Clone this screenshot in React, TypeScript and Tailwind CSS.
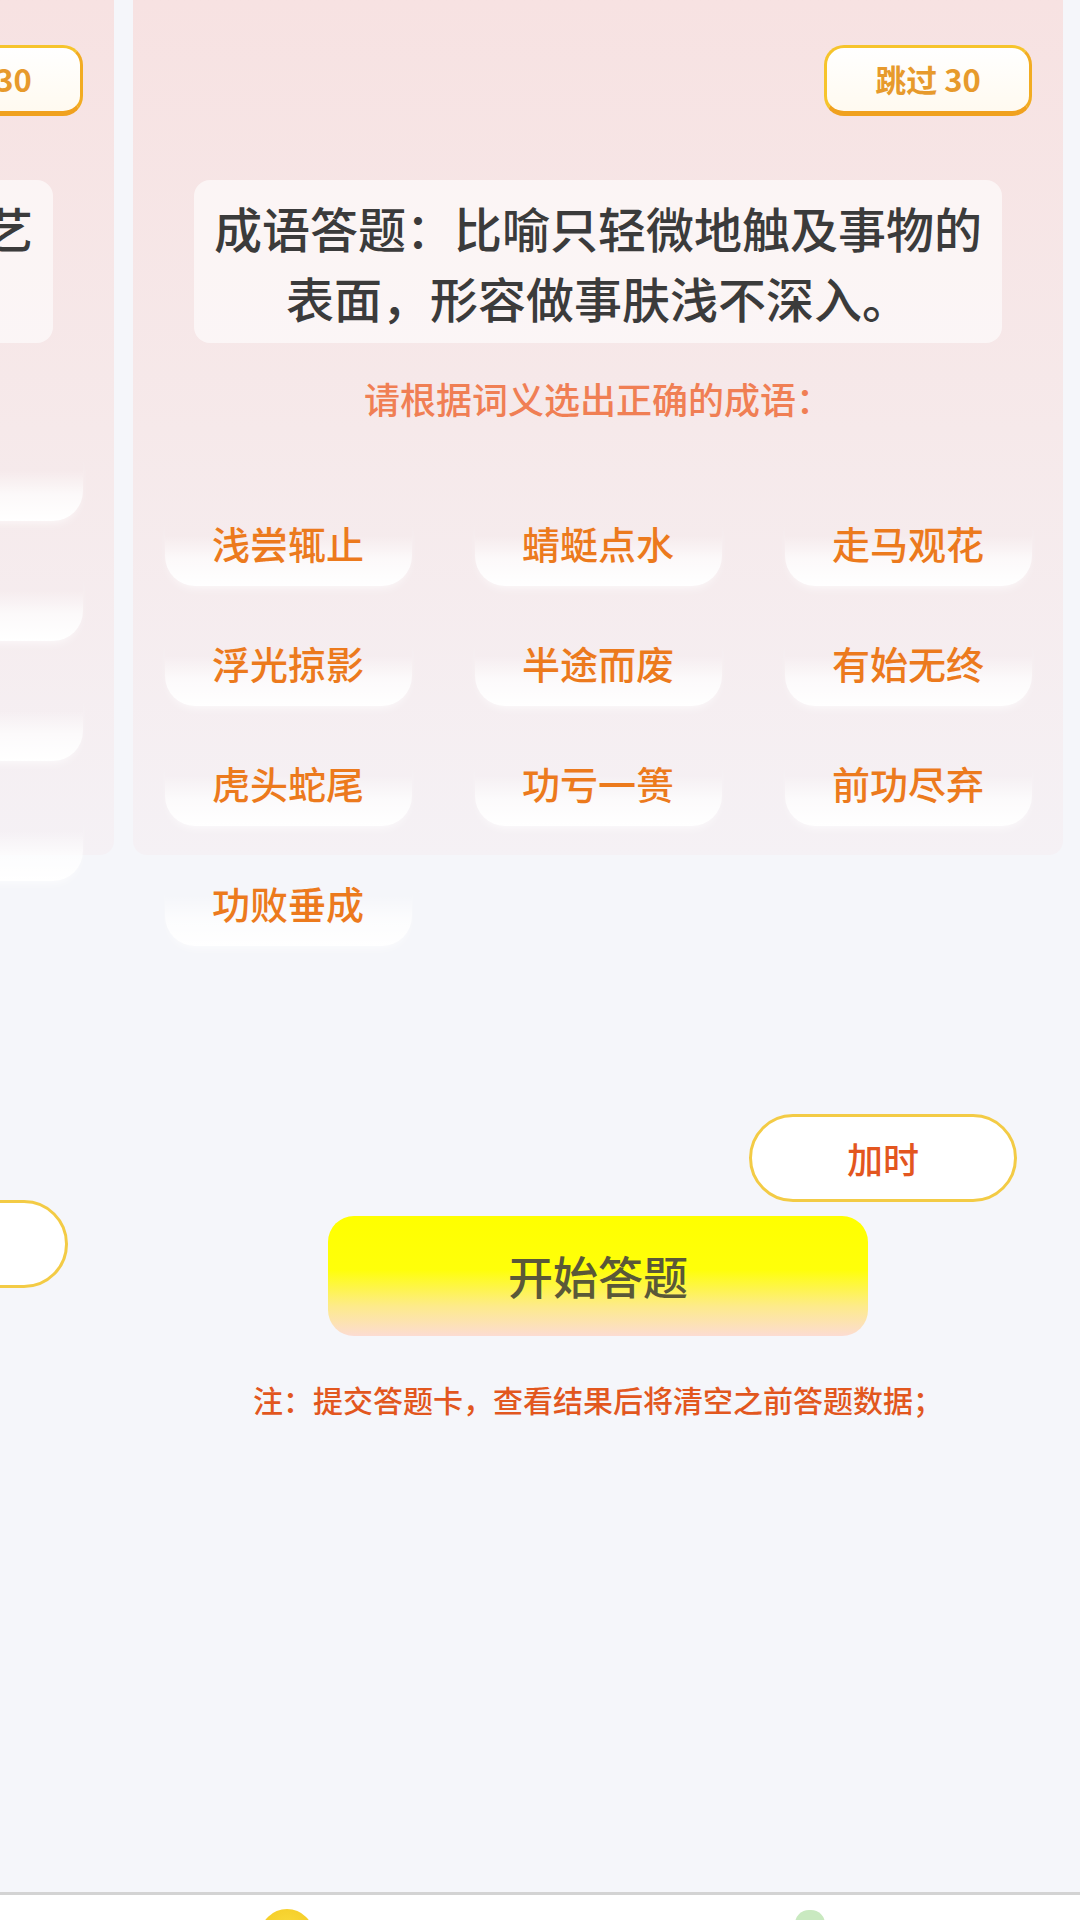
import React from 'react';

interface SlideProps {
  question: string[];
  options: string[];
  gridTop: string;
  addTimeTop: string;
  className?: string;
}

function Slide({ question, options, gridTop, addTimeTop, className }: SlideProps) {
  return (
    <div className={`w-[930px] shrink-0 flex flex-col ${className ?? ''}`}>
      {/* card: content may run past its bottom edge */}
      <div className="h-[855px] shrink-0 rounded-b-[14px] bg-linear-to-b from-[#f7e2e2] via-[#f6e9ea] to-[#f5f1f5] px-[31px] pt-[45px]">
        <div className="flex justify-end">
          <button className="w-[208px] h-[71px] rounded-[20px] border-[3px] border-[#f6c42c] border-b-[5px] border-b-[#f0a11e] border-r-[#f2ac22] bg-linear-to-b from-white to-[#fffaf0] text-[31px] font-bold text-[#e79a2c] flex items-center justify-center">
            跳过 30
          </button>
        </div>

        <div className="mt-[64px] mx-auto w-[808px] h-[163px] rounded-[16px] bg-white/60 flex flex-col items-center justify-center text-[48px] leading-[70px] font-medium text-[#3b3b3b] text-center">
          {question.map((line) => (
            <span key={line} className="block whitespace-nowrap">{line}</span>
          ))}
        </div>

        <p className="mt-[31px] text-center text-[36px] leading-[48px] font-medium text-[#f07f54]">
          请根据词义选出正确的成语：
        </p>

        <div className={`${gridTop} mx-auto w-[867px] grid grid-cols-3 gap-x-[63px] gap-y-[36px]`}>
          {options.map((opt, i) => (
            <div
              key={i}
              className="h-[84px] rounded-[30px] bg-[linear-gradient(to_bottom,rgba(255,255,255,0)_40%,rgba(255,255,255,0.7)_68%,#ffffff_100%)] shadow-[0_6px_12px_-6px_rgba(255,255,255,0.9)] flex items-center justify-center pb-[4px] text-[38px] font-medium text-[#ec7a1d]"
            >
              {opt}
            </div>
          ))}
        </div>
      </div>

      {/* add time */}
      <div className={`${addTimeTop} shrink-0 flex justify-end pr-[46px]`}>
        <button className="w-[268px] h-[88px] rounded-full border-[3px] border-[#f3cb45] bg-white text-[36px] font-medium text-[#e3561f] flex items-center justify-center">
          加时
        </button>
      </div>

      {/* start */}
      <button className="mt-[14px] shrink-0 mx-auto w-[540px] h-[120px] rounded-[26px] bg-[linear-gradient(to_bottom,#ffff00_0%,#ffff0a_45%,#fdeb8a_75%,#fcdcd2_100%)] text-[45px] font-medium text-[#5a5838] flex items-center justify-center">
        开始答题
      </button>

      <p className="mt-[43px] shrink-0 text-center text-[30px] leading-[40px] font-medium text-[#e2571e]">
        注：提交答题卡，查看结果后将清空之前答题数据；
      </p>
    </div>
  );
}

const mainOptions = ['浅尝辄止', '蜻蜓点水', '走马观花', '浮光掠影', '半途而废', '有始无终', '虎头蛇尾', '功亏一篑', '前功尽弃', '功败垂成'];
const prevOptions = ['娴熟', '精湛', '高明', '纯熟', '老练', '熟练', '灵巧', '拙劣', '生疏', '平庸', '粗糙', '笨拙'];

export default function App() {
  return (
    <div className="w-[1080px] h-[1920px] bg-[#f5f6fa] flex flex-col overflow-hidden font-['Noto_Sans_CJK_SC','Noto_Sans',sans-serif]">
      <div className="h-[1892px] shrink-0 flex gap-[19px] overflow-hidden">
        <Slide
          className="-ml-[816px]"
          question={['词语答题：形容人掌握了高超的技艺', '达到了纯熟的境界。']}
          options={prevOptions}
          gridTop="mt-[15px]"
          addTimeTop="mt-[345px]"
        />
        <Slide
          question={['成语答题：比喻只轻微地触及事物的', '表面，形容做事肤浅不深入。']}
          options={mainOptions}
          gridTop="mt-[80px]"
          addTimeTop="mt-[259px]"
        />
      </div>

      {/* bottom tab bar */}
      <nav className="h-[28px] shrink-0 border-t-[3px] border-[#d3d3d3] bg-white grid grid-cols-2 overflow-hidden">
        <div className="flex justify-center pl-[34px] pt-[14px]">
          <div className="w-[54px] h-[54px] rounded-full bg-[radial-gradient(circle_at_50%_40%,#f9dc3e,#f3c51c)]" />
        </div>
        <div className="flex justify-center pt-[15px]">
          <div className="w-[66px] h-[40px] flex flex-col items-center">
            <div className="w-[30px] h-[14px] rounded-t-full bg-[#c9e9c0]" />
            <div className="w-[66px] h-[26px] rounded-t-[8px] bg-[#d4eecb]" />
          </div>
        </div>
      </nav>
    </div>
  );
}
